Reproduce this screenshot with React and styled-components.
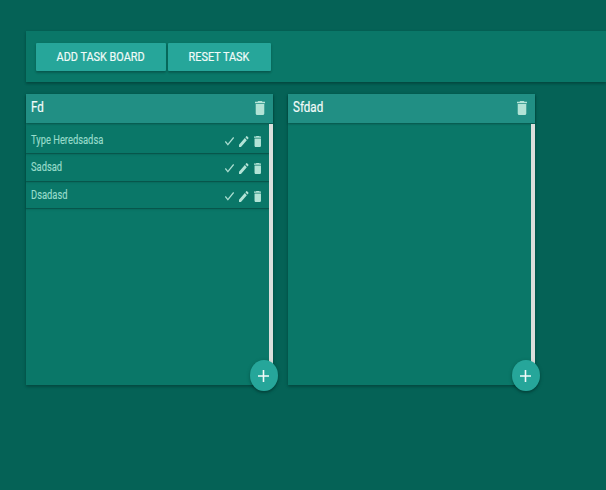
import React from 'react';
import styled, { createGlobalStyle } from 'styled-components';

const GlobalStyle = createGlobalStyle`
  * { box-sizing: border-box; }
  body {
    margin: 0;
    overflow: hidden;
    background: #056256;
    font-family: Roboto, sans-serif;
  }
`;

const Page = styled.main`
  width: 100%;
  height: 490px;
  overflow: hidden;
  padding: 31px 0 0 26px;
  background: #056256;
`;

const Toolbar = styled.header`
  display: flex;
  gap: 2px;
  height: 51px;
  padding: 12px 10px;
  background: #0a7768;
  box-shadow: 0 2px 2px rgba(0, 0, 0, 0.16), 0 1px 3px rgba(0, 0, 0, 0.14);
`;

const Button = styled.button`
  display: flex;
  align-items: center;
  justify-content: center;
  width: ${(p) => p.$width}px;
  height: 27.5px;
  padding: 0;
  border: 0;
  border-radius: 1px;
  background: #26a69a;
  color: #f1fbf9;
  font: 400 12.5px/27px Roboto, sans-serif;
  -webkit-text-stroke: 0.2px currentColor;
  text-transform: uppercase;
  white-space: nowrap;
  box-shadow: 0 2px 2px rgba(0, 0, 0, 0.14), 0 1px 3px rgba(0, 0, 0, 0.16);
`;

const Label = styled.span`
  display: block;
  white-space: nowrap;
  transform: scaleX(${(p) => p.$stretch});
  transform-origin: ${(p) => p.$origin || 'left'} center;
`;

const Boards = styled.section`
  display: flex;
  gap: 15.5px;
  margin-top: 12px;
`;

const Board = styled.article`
  position: relative;
  width: 246.5px;
  height: 291px;
  background: #0a7768;
  box-shadow: 0 2px 2px rgba(0, 0, 0, 0.14), 0 1px 4px rgba(0, 0, 0, 0.16);
`;

const BoardHeader = styled.div`
  display: flex;
  justify-content: space-between;
  height: 29px;
  padding: 0 7.5px 0 5px;
  background: #218f84;
  color: #f1fbf9;
  font-size: 14px;
  -webkit-text-stroke: 0.2px currentColor;
  line-height: 27px;
  box-shadow: 0 1px 2px rgba(0, 0, 0, 0.3);
`;

const Body = styled.div`
  display: flex;
  height: 262px;
`;

const Tasks = styled.ul`
  flex: 1;
  margin: 0;
  padding: 2px 0 0;
  list-style: none;
`;

const ScrollThumb = styled.div`
  width: 3.5px;
  height: 245px;
  margin-top: 1px;
  background: #dcdfdc;
`;

const Task = styled.li`
  display: flex;
  align-items: flex-start;
  justify-content: space-between;
  height: ${(p) => p.$height}px;
  padding: 0 8px 0 5px;
  padding-top: ${(p) => p.$top}px;
  color: #98dccb;
  font-size: 12px;
  -webkit-text-stroke: 0.15px currentColor;
  line-height: 14px;
  box-shadow: 0 1px 1px rgba(0, 0, 0, 0.22), 0 2px 2px rgba(0, 0, 0, 0.07);
`;

const Actions = styled.div`
  display: flex;
  align-items: center;
  gap: 5px;
  padding-top: 3px;
`;

const Icon = styled.svg`
  display: block;
  flex: none;
  width: ${(p) => p.$w}px;
  height: ${(p) => p.$h}px;
  margin-top: ${(p) => p.$top || 0}px;
  fill: #b2e3d6;
`;

const AddButton = styled.button`
  position: absolute;
  right: -5px;
  bottom: -6px;
  display: flex;
  align-items: center;
  justify-content: center;
  width: 27.5px;
  height: 31px;
  padding: 0;
  border: 0;
  border-radius: 50%;
  background: #26a69a;
  box-shadow: 0 2px 2px rgba(0, 0, 0, 0.18), 0 1px 4px rgba(0, 0, 0, 0.18);
`;

const PlusIcon = styled.svg`
  width: 11px;
  height: 12px;
  fill: #f4fbfa;
`;

const Trash = ({ w, h, top }) => (
  <Icon $w={w} $h={h} $top={top} viewBox="5 3 14 18" preserveAspectRatio="none">
    <path d="M6 19c0 1.1.9 2 2 2h8c1.1 0 2-.9 2-2V7H6v12zM19 4h-3.5l-1-1h-5l-1 1H5v2h14V4z" />
  </Icon>
);

const Check = () => (
  <Icon $w={9} $h={8.5} viewBox="3.4 5.6 17.6 13.4" preserveAspectRatio="none">
    <path
      d="M9 16.2L4.8 12l-1.4 1.4L9 19 21 7l-1.4-1.4L9 16.2z"
      stroke="#b2e3d6"
      strokeWidth="0.3"
    />
  </Icon>
);

const Pencil = () => (
  <Icon $w={9.5} $h={11} viewBox="3 3 18 18" preserveAspectRatio="none">
    <path d="M3 17.25V21h3.75L17.81 9.94l-3.75-3.75L3 17.25zM20.71 7.04c.39-.39.39-1.02 0-1.41l-2.34-2.34c-.39-.39-1.02-.39-1.41 0l-1.83 1.83 3.75 3.75 1.83-1.83z" />
  </Icon>
);

const boards = [
  {
    title: 'Fd',
    tasks: [
      { name: 'Type Heredsadsa', height: 28, top: 8 },
      { name: 'Sadsad', height: 28, top: 7 },
      { name: 'Dsadasd', height: 27, top: 7 },
    ],
  },
  { title: 'Sfdad', tasks: [] },
];

export default function App() {
  return (
    <Page>
      <GlobalStyle />
      <Toolbar>
        <Button $width={130}>
          <Label $stretch={0.87} $origin="center">Add Task Board</Label>
        </Button>
        <Button $width={102.5}>
          <Label $stretch={0.87} $origin="center">Reset Task</Label>
        </Button>
      </Toolbar>
      <Boards>
        {boards.map((board) => (
          <Board key={board.title}>
            <BoardHeader>
              <Label $stretch={0.83}>{board.title}</Label>
              <Trash w={10} h={14} top={7} />
            </BoardHeader>
            <Body>
              <Tasks>
                {board.tasks.map((task) => (
                  <Task key={task.name} $height={task.height} $top={task.top}>
                    <Label $stretch={0.78}>{task.name}</Label>
                    <Actions>
                      <Check />
                      <Pencil />
                      <Trash w={7.5} h={11} />
                    </Actions>
                  </Task>
                ))}
              </Tasks>
              <ScrollThumb />
            </Body>
            <AddButton aria-label="Add task">
              <PlusIcon viewBox="5 5 14 14" preserveAspectRatio="none">
                <path d="M19 13h-6v6h-2v-6H5v-2h6V5h2v6h6v2z" />
              </PlusIcon>
            </AddButton>
          </Board>
        ))}
      </Boards>
    </Page>
  );
}
